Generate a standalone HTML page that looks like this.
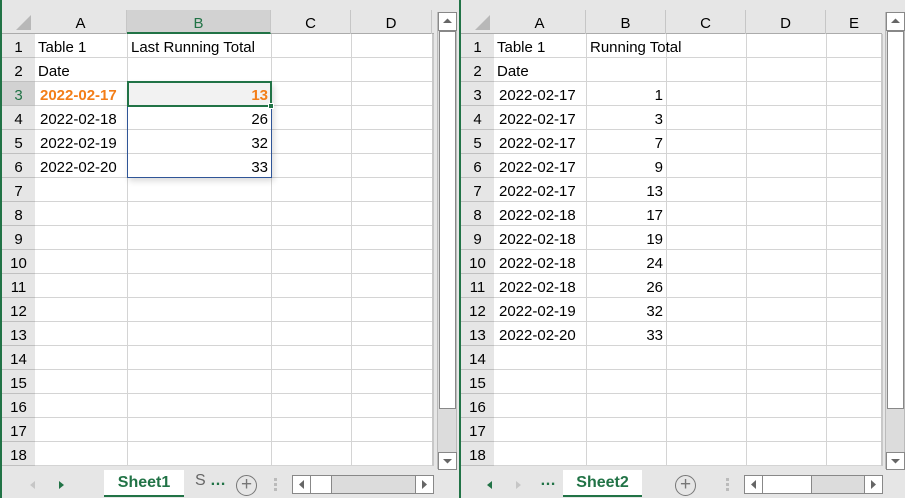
<html><head><style>
*{margin:0;padding:0;box-sizing:border-box}
body{width:905px;height:498px;background:#e6e6e6;position:relative;overflow:hidden;font-family:"Liberation Sans",sans-serif;font-size:15px;color:#000}
.a{position:absolute}
.grid{background:#fff;background-image:repeating-linear-gradient(to bottom,transparent 0,transparent 23px,#d4d4d4 23px,#d4d4d4 24px)}
.vl{position:absolute;width:1px;background:#d4d4d4}
.rh{position:absolute;width:33px;height:24px;line-height:27px;text-align:center;background:#e6e6e6;border-bottom:1px solid #c0c0c0;font-size:15px}
.ch{position:absolute;top:10px;height:24px;line-height:27px;text-align:center;border-right:1px solid #c6c6c6;font-size:15px}
.t{position:absolute;height:24px;line-height:28px;white-space:nowrap}
.r{text-align:right}
.sb{position:absolute;border:1px solid #888;background:#fff}
</style></head><body>
<!-- LEFT PANE -->
<div class="a" style="left:0;top:0;width:2px;height:498px;background:#217346"></div>
<div class="a grid" style="left:35px;top:34px;width:399px;height:432px"></div>
<div class="vl" style="left:127px;top:34px;height:432px"></div>
<div class="vl" style="left:271px;top:34px;height:432px"></div>
<div class="vl" style="left:351px;top:34px;height:432px"></div>
<div class="a" style="left:432px;top:34px;width:2px;height:432px;background:#c8c8c8"></div>
<div class="a" style="left:2px;top:34px;width:33px;height:432px;background:#e6e6e6;border-right:1px solid #ababab"></div>
<div class="a" style="left:2px;top:33px;width:432px;height:1px;background:#ababab"></div>
<svg class="a" style="left:15px;top:14px" width="18" height="18"><polygon points="16,1 16,16 1,16" fill="#b8b8b8"/></svg>
<div class="ch" style="left:35px;width:92px">A</div>
<div class="ch" style="left:127px;width:144px;background:#d2d2d2;color:#217346;border-bottom:2px solid #217346">B</div>
<div class="ch" style="left:271px;width:80px">C</div>
<div class="ch" style="left:351px;width:81px">D</div>
<div class="rh" style="left:2px;top:34px">1</div><div class="rh" style="left:2px;top:58px">2</div>
<div class="rh" style="left:2px;top:82px;background:#d2d2d2;color:#217346">3</div><div class="rh" style="left:2px;top:106px">4</div>
<div class="rh" style="left:2px;top:130px">5</div><div class="rh" style="left:2px;top:154px">6</div>
<div class="rh" style="left:2px;top:178px">7</div><div class="rh" style="left:2px;top:202px">8</div>
<div class="rh" style="left:2px;top:226px">9</div><div class="rh" style="left:2px;top:250px">10</div>
<div class="rh" style="left:2px;top:274px">11</div><div class="rh" style="left:2px;top:298px">12</div>
<div class="rh" style="left:2px;top:322px">13</div><div class="rh" style="left:2px;top:346px">14</div>
<div class="rh" style="left:2px;top:370px">15</div><div class="rh" style="left:2px;top:394px">16</div>
<div class="rh" style="left:2px;top:418px">17</div><div class="rh" style="left:2px;top:442px">18</div>
<div class="a" style="left:128px;top:82px;width:143px;height:24px;background:#f2f2f2"></div>
<div class="a" style="left:127px;top:82px;width:145px;height:96px;border:1px solid #2f5597;box-shadow:2px 3px 6px rgba(0,0,0,.15)"></div>
<div class="a" style="left:127px;top:81px;width:145px;height:26px;border:2px solid #217346"></div>
<div class="a" style="left:268px;top:103px;width:6px;height:6px;background:#217346;border:1px solid #fff"></div>
<div class="t" style="left:38px;top:34px">Table 1</div>
<div class="t" style="left:131px;top:34px">Last Running Total</div>
<div class="t" style="left:38px;top:58px">Date</div>
<div class="t" style="left:40px;top:82px;color:#f37e18;font-weight:bold">2022-02-17</div>
<div class="t r" style="left:128px;top:82px;width:140px;color:#f37e18;font-weight:bold">13</div>
<div class="t" style="left:40px;top:106px">2022-02-18</div><div class="t r" style="left:128px;top:106px;width:140px">26</div>
<div class="t" style="left:40px;top:130px">2022-02-19</div><div class="t r" style="left:128px;top:130px;width:140px">32</div>
<div class="t" style="left:40px;top:154px">2022-02-20</div><div class="t r" style="left:128px;top:154px;width:140px">33</div>
<!-- vscroll left -->
<div class="sb" style="left:437px;top:12px;width:20px;height:457px;background:#dcdcdc;border-color:#bbb"></div>
<div class="sb" style="left:438px;top:12px;width:19px;height:19px"><svg width="17" height="17"><polygon points="4,10 8.5,5.5 13,10" fill="#666"/></svg></div>
<div class="sb" style="left:439px;top:31px;width:17px;height:378px"></div>
<div class="sb" style="left:438px;top:452px;width:19px;height:18px"><svg width="17" height="16"><polygon points="4,6 8.5,10.5 13,6" fill="#666"/></svg></div>
<!-- tabs left -->
<div class="a" style="left:2px;top:470px;width:456px;height:28px;background:#e6e6e6"></div>
<svg class="a" style="left:28px;top:479px" width="10" height="12"><polygon points="7,2 7,10 2,6" fill="#c6c6c6"/></svg>
<svg class="a" style="left:56px;top:479px" width="10" height="12"><polygon points="3,2 3,10 8,6" fill="#217346"/></svg>
<div class="a" style="left:104px;top:470px;width:80px;height:27px;background:#fff;border-bottom:2px solid #217346;color:#217346;font-weight:bold;font-size:16px;text-align:center;line-height:25px">Sheet1</div>
<div class="a" style="left:195px;top:472px;color:#666;font-size:16px">S</div>
<div class="a" style="left:210px;top:472px;color:#217346;font-size:16px;font-weight:bold">…</div>
<div class="a" style="left:236px;top:475px;width:21px;height:21px;border:1.5px solid #777;border-radius:50%;text-align:center;line-height:17px;font-size:19px;color:#777">+</div>
<div class="a" style="left:274px;top:478px;width:3px;height:14px;background:repeating-linear-gradient(#bbb 0 3px,transparent 3px 5px)"></div>
<div class="sb" style="left:292px;top:475px;width:142px;height:19px;background:#dcdcdc"></div>
<div class="sb" style="left:292px;top:475px;width:19px;height:19px"><svg width="17" height="17"><polygon points="11,4 11,13 6,8.5" fill="#666"/></svg></div>
<div class="sb" style="left:310px;top:475px;width:22px;height:19px"></div>
<div class="sb" style="left:415px;top:475px;width:19px;height:19px"><svg width="17" height="17"><polygon points="6,4 6,13 11,8.5" fill="#666"/></svg></div>
<!-- divider -->
<div class="a" style="left:459px;top:0;width:2px;height:498px;background:#217346"></div>
<!-- RIGHT PANE -->
<div class="a grid" style="left:494px;top:34px;width:388px;height:432px"></div>
<div class="vl" style="left:586px;top:34px;height:432px"></div>
<div class="vl" style="left:666px;top:34px;height:432px"></div>
<div class="vl" style="left:746px;top:34px;height:432px"></div>
<div class="vl" style="left:826px;top:34px;height:432px"></div>
<div class="a" style="left:881px;top:34px;width:2px;height:432px;background:#c8c8c8"></div>
<div class="a" style="left:461px;top:34px;width:33px;height:432px;background:#e6e6e6;border-right:1px solid #ababab"></div>
<div class="a" style="left:461px;top:33px;width:421px;height:1px;background:#ababab"></div>
<svg class="a" style="left:474px;top:14px" width="18" height="18"><polygon points="16,1 16,16 1,16" fill="#b8b8b8"/></svg>
<div class="ch" style="left:494px;width:92px">A</div>
<div class="ch" style="left:586px;width:80px">B</div>
<div class="ch" style="left:666px;width:80px">C</div>
<div class="ch" style="left:746px;width:80px">D</div>
<div class="ch" style="left:826px;width:56px;border:none">E</div>
<div class="rh" style="left:461px;top:34px">1</div><div class="rh" style="left:461px;top:58px">2</div>
<div class="rh" style="left:461px;top:82px">3</div><div class="rh" style="left:461px;top:106px">4</div>
<div class="rh" style="left:461px;top:130px">5</div><div class="rh" style="left:461px;top:154px">6</div>
<div class="rh" style="left:461px;top:178px">7</div><div class="rh" style="left:461px;top:202px">8</div>
<div class="rh" style="left:461px;top:226px">9</div><div class="rh" style="left:461px;top:250px">10</div>
<div class="rh" style="left:461px;top:274px">11</div><div class="rh" style="left:461px;top:298px">12</div>
<div class="rh" style="left:461px;top:322px">13</div><div class="rh" style="left:461px;top:346px">14</div>
<div class="rh" style="left:461px;top:370px">15</div><div class="rh" style="left:461px;top:394px">16</div>
<div class="rh" style="left:461px;top:418px">17</div><div class="rh" style="left:461px;top:442px">18</div>
<div class="t" style="left:497px;top:34px">Table 1</div>
<div class="t" style="left:590px;top:34px">Running Total</div>
<div class="t" style="left:497px;top:58px">Date</div>
<div class="t" style="left:499px;top:82px">2022-02-17</div><div class="t r" style="left:587px;top:82px;width:76px">1</div>
<div class="t" style="left:499px;top:106px">2022-02-17</div><div class="t r" style="left:587px;top:106px;width:76px">3</div>
<div class="t" style="left:499px;top:130px">2022-02-17</div><div class="t r" style="left:587px;top:130px;width:76px">7</div>
<div class="t" style="left:499px;top:154px">2022-02-17</div><div class="t r" style="left:587px;top:154px;width:76px">9</div>
<div class="t" style="left:499px;top:178px">2022-02-17</div><div class="t r" style="left:587px;top:178px;width:76px">13</div>
<div class="t" style="left:499px;top:202px">2022-02-18</div><div class="t r" style="left:587px;top:202px;width:76px">17</div>
<div class="t" style="left:499px;top:226px">2022-02-18</div><div class="t r" style="left:587px;top:226px;width:76px">19</div>
<div class="t" style="left:499px;top:250px">2022-02-18</div><div class="t r" style="left:587px;top:250px;width:76px">24</div>
<div class="t" style="left:499px;top:274px">2022-02-18</div><div class="t r" style="left:587px;top:274px;width:76px">26</div>
<div class="t" style="left:499px;top:298px">2022-02-19</div><div class="t r" style="left:587px;top:298px;width:76px">32</div>
<div class="t" style="left:499px;top:322px">2022-02-20</div><div class="t r" style="left:587px;top:322px;width:76px">33</div>
<!-- vscroll right -->
<div class="sb" style="left:885px;top:12px;width:20px;height:457px;background:#dcdcdc;border-color:#bbb"></div>
<div class="sb" style="left:886px;top:12px;width:19px;height:19px"><svg width="17" height="17"><polygon points="4,10 8.5,5.5 13,10" fill="#666"/></svg></div>
<div class="sb" style="left:887px;top:31px;width:17px;height:378px"></div>
<div class="sb" style="left:886px;top:452px;width:19px;height:18px"><svg width="17" height="16"><polygon points="4,6 8.5,10.5 13,6" fill="#666"/></svg></div>
<!-- tabs right -->
<div class="a" style="left:461px;top:470px;width:444px;height:28px;background:#e6e6e6"></div>
<svg class="a" style="left:485px;top:479px" width="10" height="12"><polygon points="7,2 7,10 2,6" fill="#217346"/></svg>
<svg class="a" style="left:513px;top:479px" width="10" height="12"><polygon points="3,2 3,10 8,6" fill="#c6c6c6"/></svg>
<div class="a" style="left:540px;top:472px;color:#217346;font-size:16px;font-weight:bold">…</div>
<div class="a" style="left:563px;top:470px;width:79px;height:27px;background:#fff;border-bottom:2px solid #217346;color:#217346;font-weight:bold;font-size:16px;text-align:center;line-height:25px">Sheet2</div>
<div class="a" style="left:675px;top:475px;width:21px;height:21px;border:1.5px solid #777;border-radius:50%;text-align:center;line-height:17px;font-size:19px;color:#777">+</div>
<div class="a" style="left:726px;top:478px;width:3px;height:14px;background:repeating-linear-gradient(#bbb 0 3px,transparent 3px 5px)"></div>
<div class="sb" style="left:744px;top:475px;width:139px;height:19px;background:#dcdcdc"></div>
<div class="sb" style="left:744px;top:475px;width:19px;height:19px"><svg width="17" height="17"><polygon points="11,4 11,13 6,8.5" fill="#666"/></svg></div>
<div class="sb" style="left:762px;top:475px;width:50px;height:19px"></div>
<div class="sb" style="left:864px;top:475px;width:19px;height:19px"><svg width="17" height="17"><polygon points="6,4 6,13 11,8.5" fill="#666"/></svg></div>
</body></html>
